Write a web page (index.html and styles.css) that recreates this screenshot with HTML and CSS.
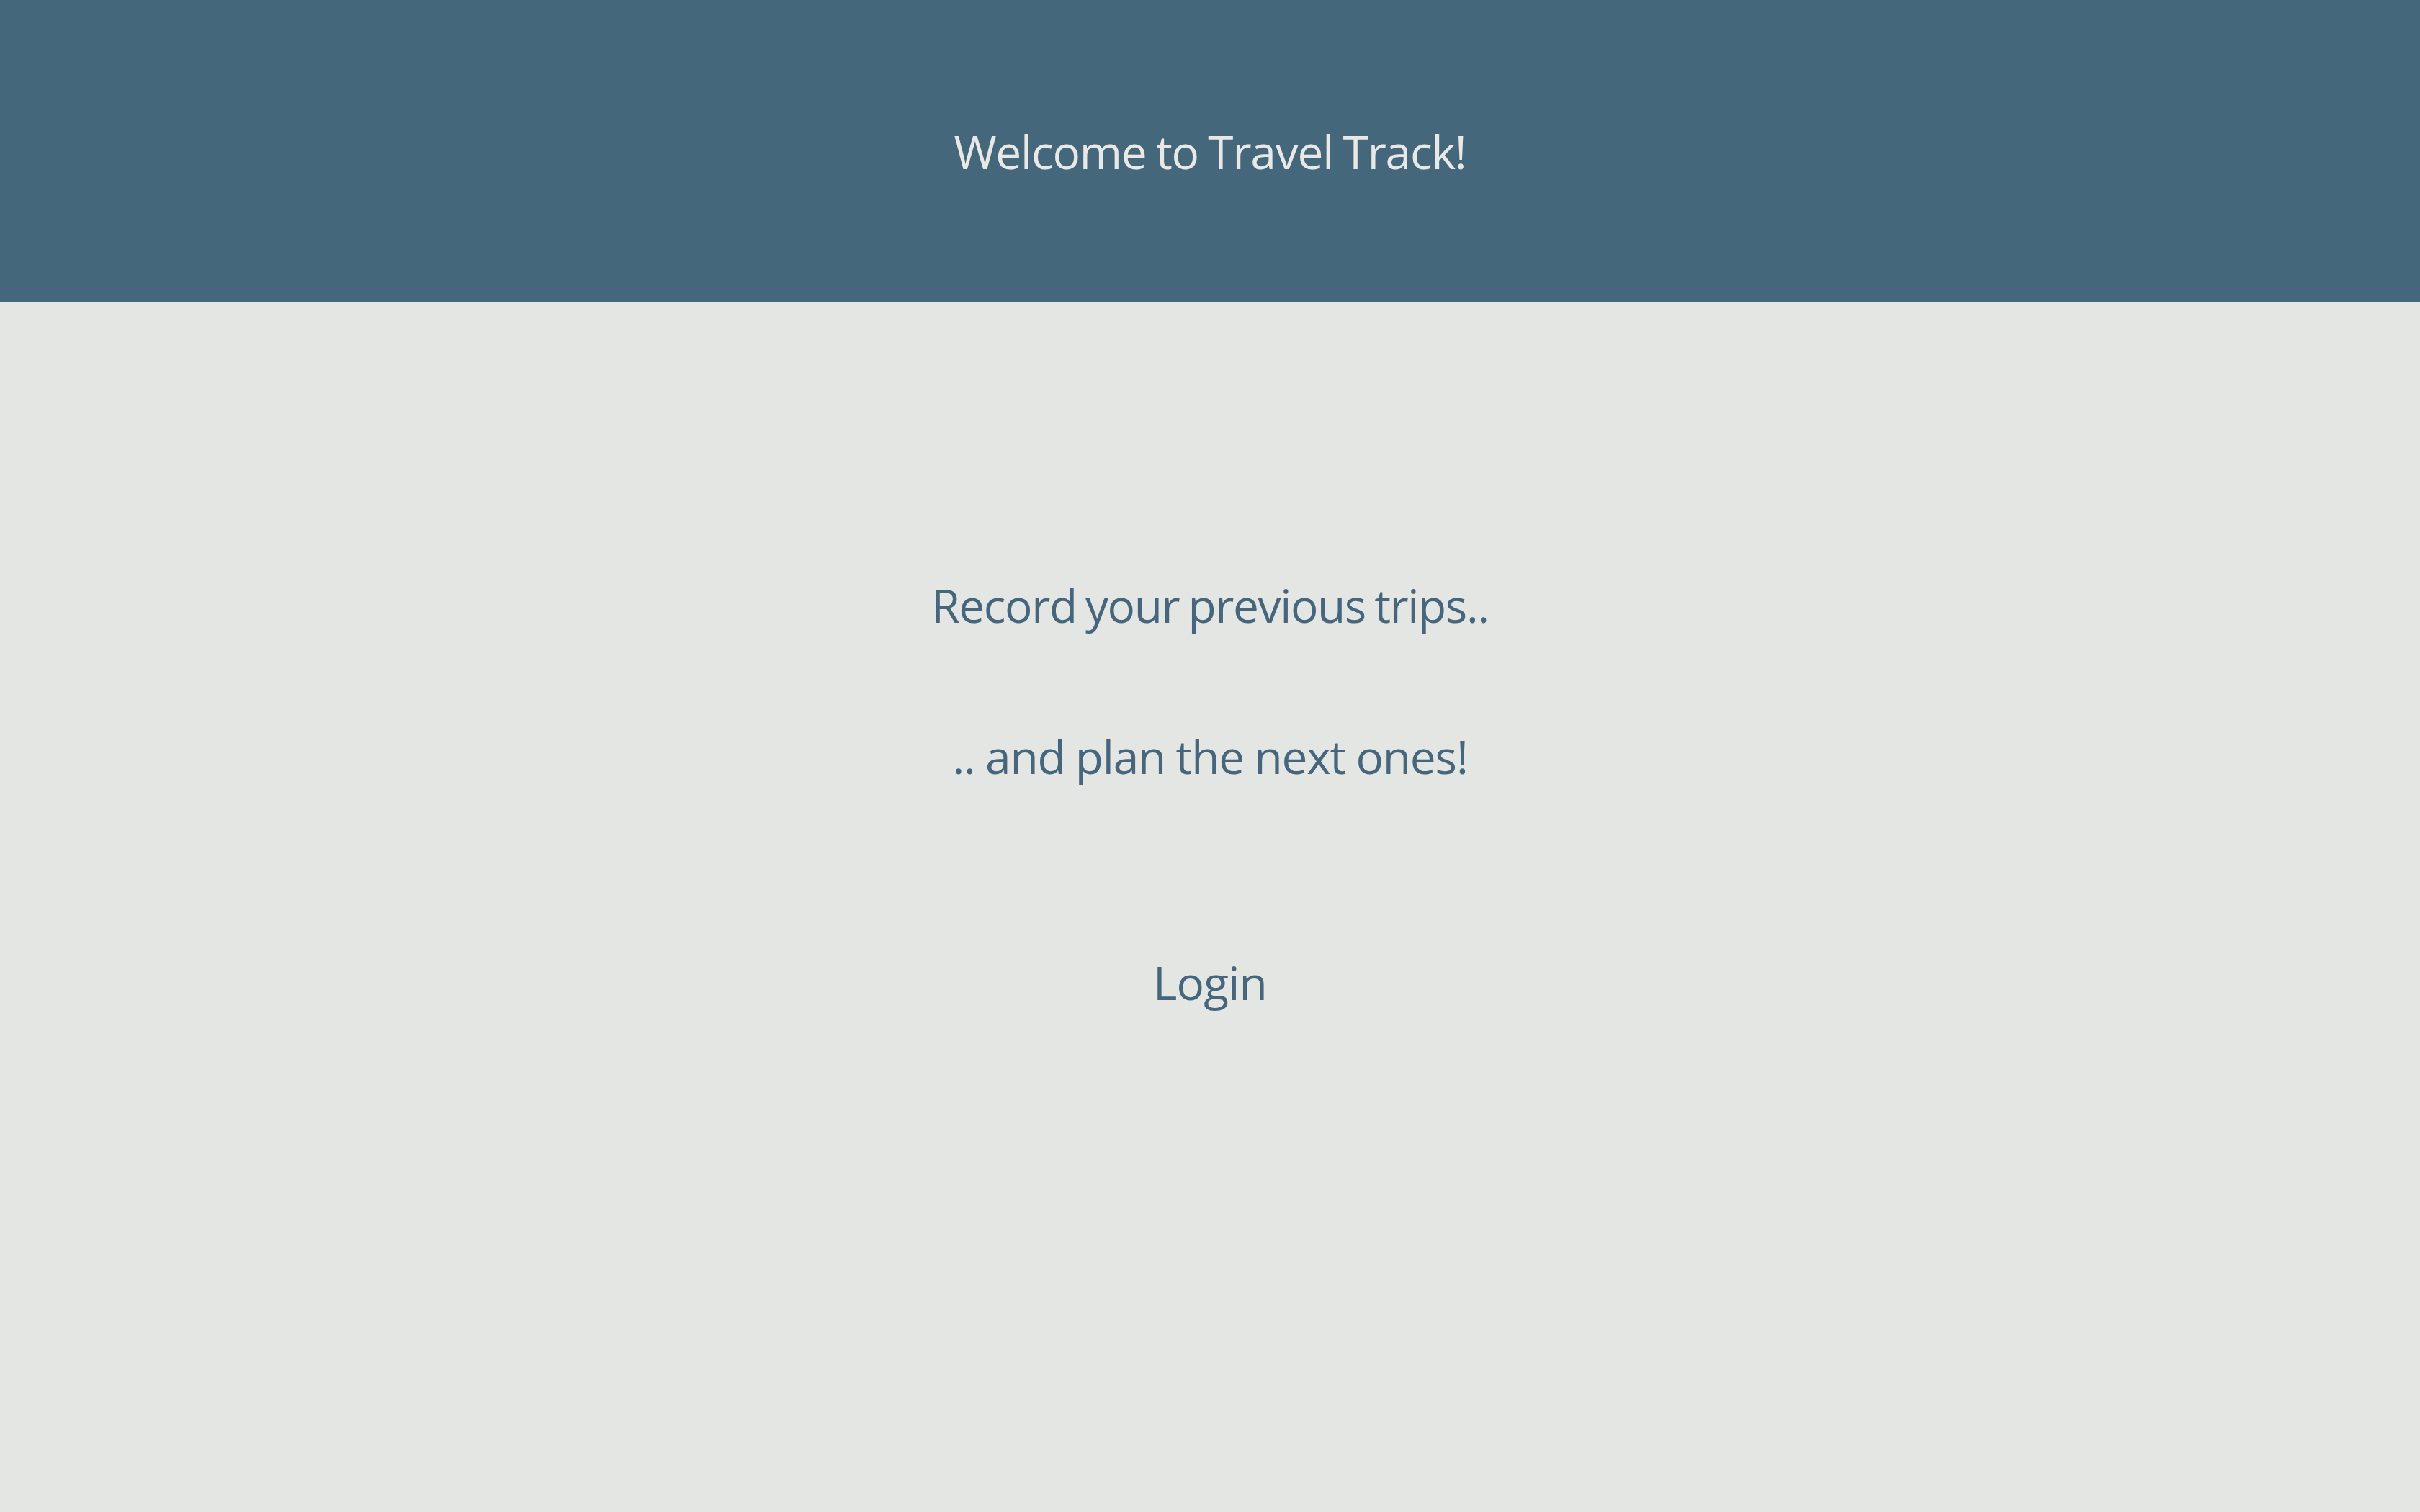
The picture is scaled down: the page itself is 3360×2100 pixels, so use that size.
FILE: index.html
```html
<!DOCTYPE html>
<html lang="en">
<head>
<meta charset="utf-8">
<title>Travel Track</title>
<link rel="stylesheet" href="styles.css">
</head>
<body>
<header class="top-bar">
  <h1 class="title">Welcome to Travel Track!</h1>
</header>
<main class="landing">
  <p class="tagline">Record your previous trips..</p>
  <p class="tagline second">.. and plan the next ones!</p>
  <a class="login" href="#">Login</a>
</main>
</body>
</html>
```
FILE: styles.css
```css
html, body {
  margin: 0;
  padding: 0;
}
body {
  background: #e4e6e3;
  font-family: "Open Sans", "Noto Sans", sans-serif;
  min-height: 100vh;
}
.top-bar {
  height: 420px;
  background: #45677c;
  display: flex;
  align-items: center;
  justify-content: center;
}
.title {
  margin: 0;
  padding-top: 2px;
  font-size: 64px;
  font-weight: 400;
  line-height: 96px;
  letter-spacing: -1.2px;
  word-spacing: -2px;
  color: #e8e9e6;
}
.landing {
  display: flex;
  flex-direction: column;
  align-items: center;
  padding-top: 373px;
}
.tagline {
  margin: 0;
  font-size: 64px;
  line-height: 96px;
  letter-spacing: -1.4px;
  word-spacing: -3px;
  color: #45667c;
}
.tagline.second {
  margin-top: 114px;
  letter-spacing: -1.2px;
  word-spacing: -1px;
}
.login {
  margin-top: 218px;
  font-size: 64px;
  line-height: 96px;
  letter-spacing: -0.8px;
  color: #45667c;
  text-decoration: none;
}
```
